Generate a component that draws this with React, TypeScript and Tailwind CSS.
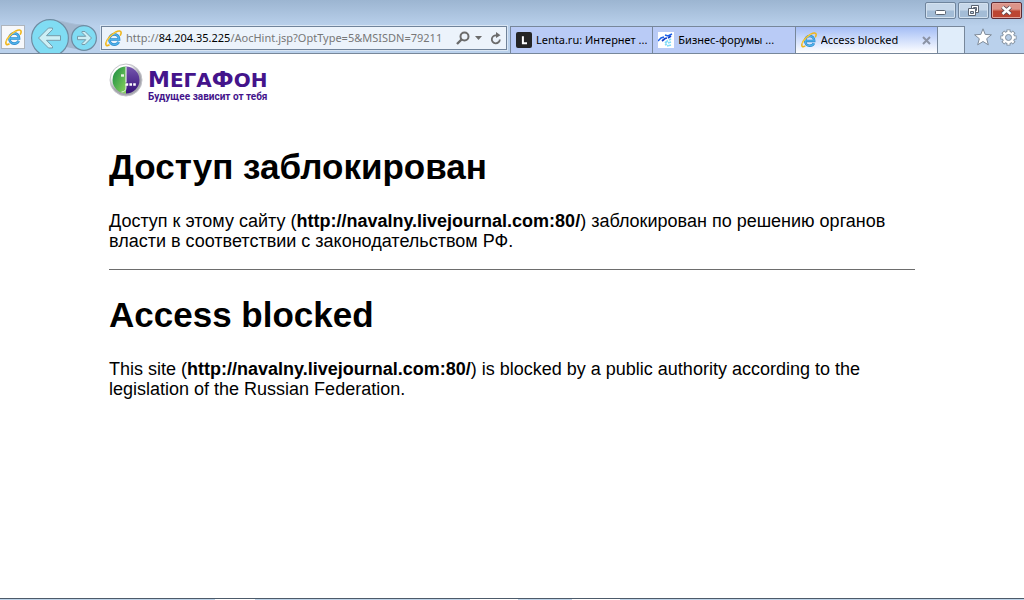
import type { ReactNode } from "react";

function IeIcon({ className }: { className: string }) {
  return (
    <svg viewBox="0 0 16 16" className={className} aria-hidden="true">
      <path
        d="M4.3 8.9H13.2C13.2 6 11.3 4.1 8.7 4.1C6 4.1 4.2 6.2 4.2 8.9C4.2 11.6 6 13.7 8.7 13.7C10.7 13.7 12.2 12.7 12.9 11.2"
        fill="none"
        stroke="#2b86c9"
        strokeWidth="2.5"
      />
      <path
        d="M4.3 8.9H13.2C13.2 6 11.3 4.1 8.7 4.1C6 4.1 4.2 6.2 4.2 8.9C4.2 11.6 6 13.7 8.7 13.7C10.7 13.7 12.2 12.7 12.9 11.2"
        fill="none"
        stroke="#4fb4ec"
        strokeWidth="1.3"
      />
      <path
        d="M3.8 14.2C1.8 15.2.4 14.7.9 12.3C1.5 9 6 3.9 10.2 1.8C12.9 .5 15.2 .7 15.2 2.5C15.2 3.3 14.9 4 14.5 4.8"
        fill="none"
        stroke="#efb51a"
        strokeWidth="1.5"
        strokeLinecap="round"
      />
      <path d="M1.3 12C2.2 8.8 6.4 4.2 10.3 2.2" fill="none" stroke="#ffe070" strokeWidth="0.6" />
    </svg>
  );
}

function NavButtons() {
  return (
    <div className="relative flex h-full w-[68px] shrink-0 overflow-hidden">
      <svg viewBox="0 0 68 34" className="absolute inset-0 h-[34px] w-[68px]" aria-hidden="true">
        <path d="M24 1C36 3 44 6 54 6L46 30L36 28Z" fill="#a3b7ce" />
        <path d="M20 .5C34 2 42 6 54 6" fill="none" stroke="#a7bdd6" />
        <circle cx="20" cy="19" r="18.4" fill="#80dcf3" stroke="#6f8ba1" strokeWidth="1.2" />
        <circle cx="54" cy="19" r="12.4" fill="#80dcf3" stroke="#6f8ba1" strokeWidth="1.2" />
        <path
          d="M8.5 19L18.5 9H22.5V10.5L16.5 16.7H30.5V21.3H16.5L22.5 27.5V29H18.5Z"
          fill="#cdeff5"
          stroke="#769aa9"
          strokeWidth="1"
        />
        <path
          d="M61.5 19L55 12.5H52V13.5L55.8 17.3H47.5V20.7H55.8L52 24.5V25.5H55Z"
          fill="#cdeff5"
          stroke="#769aa9"
          strokeWidth="1"
        />
      </svg>
      <button type="button" aria-label="Back" className="relative h-full w-10" />
      <button type="button" aria-label="Forward" className="relative h-full w-7" />
    </div>
  );
}

function Tab({ icon, title, active = false }: { icon: ReactNode; title: string; active?: boolean }) {
  return (
    <div
      className={
        active
          ? "flex min-w-0 flex-1 items-center border-l border-[#77879a] bg-linear-to-b from-[#a4bdf5] to-white pl-[5px]"
          : "flex min-w-0 flex-1 items-center border-l border-[#77879a] bg-[#b9cbf6] pl-[5px]"
      }
    >
      <button type="button" className="flex min-w-0 flex-1 items-center gap-1 text-left">
        {icon}
        <span className="truncate">{title}</span>
      </button>
      {active && (
        <button type="button" aria-label="Close tab" className="shrink-0 pr-[6px] pl-[2px]">
          <svg viewBox="0 0 9 9" className="size-[9px]">
            <path d="M1 1L8 8M8 1L1 8" stroke="#8b93a5" strokeWidth="2" />
          </svg>
        </button>
      )}
    </div>
  );
}

function LentaIcon() {
  return (
    <svg viewBox="0 0 16 16" className="size-4 shrink-0" aria-hidden="true">
      <rect width="16" height="16" rx="2" fill="#252525" />
      <path d="M6.9 4.3V11.2H11" fill="none" stroke="#fff" strokeWidth="2" />
    </svg>
  );
}

function ForumIcon() {
  return (
    <svg viewBox="0 0 16 16" className="size-4 shrink-0" aria-hidden="true">
      <rect width="16" height="16" fill="#fff" />
      <path d="M0 9L3 6L6 5M7 3L10 4L14 2" fill="none" stroke="#1c62e8" strokeWidth="1.5" />
      <path d="M4 9L7 6.5L9 6M10 6L13 4" fill="none" stroke="#1640c8" strokeWidth="1.7" />
      <path d="M7 11L10 8.5M11 8L13 7M7 13L9 12M10 11L13 10M9 14L13 13" fill="none" stroke="#82dcf8" strokeWidth="1.8" />
    </svg>
  );
}

function TitleBar() {
  const plain =
    "flex h-[17px] w-[31px] items-center justify-center rounded-[2px] border border-[#6f849c] bg-linear-to-b from-[#c6d7e9] from-45% to-[#a3bcd6] to-55% shadow-[inset_0_0_0_1px_#d3e1ef]";
  return (
    <div className="flex h-[19px] items-end justify-end gap-[2px] pr-[2px]">
      <button type="button" aria-label="Minimize" className={plain}>
        <svg viewBox="0 0 13 11" className="h-[11px] w-[13px]">
          <rect x="1.5" y="5.5" width="10" height="4" rx="1" fill="#fff" stroke="#5a6370" />
        </svg>
      </button>
      <button type="button" aria-label="Restore" className={plain}>
        <svg viewBox="0 0 13 11" className="h-[11px] w-[13px]">
          <path d="M4.5 .5H11.5V7.5H4.5Z" fill="#fff" stroke="#5a6370" />
          <path d="M6.5 2.5H9.5V5.5H6.5Z" fill="#b7cade" stroke="#5a6370" />
          <path d="M1.5 3.5H8.5V10.5H1.5Z" fill="#fff" stroke="#5a6370" />
          <path d="M3.5 6.5H6.5V8.5H3.5Z" fill="#b7cade" stroke="#5a6370" />
        </svg>
      </button>
      <button
        type="button"
        aria-label="Close"
        className="flex h-[17px] w-[31px] items-center justify-center rounded-[2px] border border-[#5c2a33] bg-linear-to-b from-[#dc9489] from-40% to-[#bc4532] to-55% shadow-[inset_0_0_0_1px_#e2a49b]"
      >
        <svg viewBox="0 0 13 11" className="h-[11px] w-[13px]">
          <path d="M2.5 2L10.5 9M10.5 2L2.5 9" stroke="#594852" strokeWidth="4.2" />
          <path d="M2.5 2L10.5 9M10.5 2L2.5 9" stroke="#fff" strokeWidth="2.4" />
        </svg>
      </button>
    </div>
  );
}

function Toolbar() {
  return (
    <div className="flex h-[34px] pl-[1px]">
      <button
        type="button"
        aria-label="Pinned site"
        className="mt-[6px] flex size-6 shrink-0 items-center justify-center border border-[#aeb5bd] bg-[#f6f8fb]"
      >
        <IeIcon className="size-[17px]" />
      </button>
      <div className="ml-[5px] flex">
        <NavButtons />
      </div>
      <div className="mt-[7px] ml-[3px] flex h-6 w-[406px] min-w-0 shrink items-center border border-[#70839a] bg-[#ecf3fb] pr-1 pl-[3px] outline outline-[#d8e5f4]">
        <IeIcon className="size-[17px] shrink-0" />
        <div className="ml-1 flex-1 overflow-hidden whitespace-nowrap text-[#777]">
          http://<span className="text-black">84.204.35.225</span>/AocHint.jsp?OptType=5&amp;MSISDN=79211
        </div>
        <button type="button" aria-label="Search" className="ml-1 shrink-0">
          <svg viewBox="0 0 14 14" className="size-[14px]">
            <circle cx="8.5" cy="5.5" r="4" fill="none" stroke="#6b6b6b" strokeWidth="2" />
            <path d="M5.5 8.5L1 13" stroke="#6b6b6b" strokeWidth="2.4" />
          </svg>
        </button>
        <button type="button" aria-label="Show addresses" className="ml-[5px] shrink-0">
          <svg viewBox="0 0 7 4" className="h-1 w-[7px]">
            <path d="M0 0H7L3.5 4Z" fill="#6b6b6b" />
          </svg>
        </button>
        <button type="button" aria-label="Refresh" className="ml-2 shrink-0">
          <svg viewBox="0 0 12 13" className="h-[13px] w-3">
            <path d="M6.5 3.4A4 4 0 1 0 9.8 7.4" fill="none" stroke="#6b6b6b" strokeWidth="1.8" />
            <path d="M6 0V6L10.5 3.2Z" fill="#6b6b6b" />
          </svg>
        </button>
      </div>
      <div className="mt-[7px] ml-[3px] flex min-w-0 flex-1 border-t border-[#77879a]">
        <Tab icon={<LentaIcon />} title="Lenta.ru: Интернет ..." />
        <Tab icon={<ForumIcon />} title="Бизнес-форумы ..." />
        <Tab icon={<IeIcon className="size-4 shrink-0" />} title="Access blocked" active />
        <button type="button" aria-label="New tab" className="w-7 shrink-0 border-x border-[#77879a] bg-[#e0edfa]" />
      </div>
      <div className="mt-[9px] flex h-[18px] w-[59px] shrink-0 items-center gap-2 pl-[9px]">
        <button type="button" aria-label="Favorites">
          <svg viewBox="0 0 18 18" className="size-[18px]">
            <path
              d="M9 .8L11.2 6.4L17.4 6.8L12.7 10.7L14.3 16.8L9 13.5L3.7 16.8L5.3 10.7L.6 6.8L6.8 6.4Z"
              fill="#fff"
              stroke="#7f8b99"
            />
          </svg>
        </button>
        <button type="button" aria-label="Tools">
          <svg viewBox="0 0 18 18" className="size-[17px]">
            <g stroke="#7f8b99" strokeWidth="4.2">
              <path d="M9 .5V17.5M.5 9H17.5M3 3L15 15M15 3L3 15" />
            </g>
            <circle cx="9" cy="9" r="6.8" fill="#7f8b99" />
            <g stroke="#fff" strokeWidth="2.4">
              <path d="M9 1.3V16.7M1.3 9H16.7M3.6 3.6L14.4 14.4M14.4 3.6L3.6 14.4" />
            </g>
            <circle cx="9" cy="9" r="6" fill="#fff" />
            <circle cx="9" cy="9" r="3.2" fill="#b7cde7" stroke="#7f8b99" />
          </svg>
        </button>
      </div>
    </div>
  );
}

function Logo() {
  return (
    <a href="#" className="flex w-max items-start gap-[5px] text-[#44148b]">
      <svg viewBox="0 0 34 34" className="size-[34px]" aria-hidden="true">
        <defs>
          <radialGradient id="rim" cx="40%" cy="35%">
            <stop offset="70%" stopColor="#fff" />
            <stop offset="100%" stopColor="#a5a5ad" />
          </radialGradient>
          <linearGradient id="green" x1="0" y1="0" x2="1" y2="1">
            <stop offset="0" stopColor="#178a43" />
            <stop offset="1" stopColor="#8bd45d" />
          </linearGradient>
          <linearGradient id="violet" x1="0" y1="0" x2="0" y2="1">
            <stop offset="0" stopColor="#7657ae" />
            <stop offset="1" stopColor="#351078" />
          </linearGradient>
        </defs>
        <circle cx="17" cy="17" r="16" fill="url(#rim)" stroke="#c4c4ca" />
        <path d="M17 3.5A13.5 13.5 0 0 0 17 30.5Z" fill="url(#green)" />
        <path d="M17 3.5A13.5 13.5 0 0 1 17 30.5Z" fill="url(#violet)" />
        <path d="M17 4V19.5" fill="none" stroke="#e6efe8" strokeWidth="1.2" />
        <path d="M17 21V25C17 27.5 15 29 12.5 29" fill="none" stroke="#e6efe8" strokeWidth="1" />
        <path d="M12 12.5H15" stroke="#e9f5e4" strokeWidth="2.4" />
        <path d="M16.6 21.5H19.2M20.4 21.5H23M24.2 21.5H26.8" stroke="#fff" strokeWidth="2.4" />
      </svg>
      <span className="flex flex-col pt-[6px] font-bold">
        <span className="font-['DejaVu_Sans',sans-serif] text-[22px] leading-[21px]">
          М<span className="text-[20px]">ЕГА</span>Ф<span className="text-[20px]">ОН</span>
        </span>
        <span className="font-[Roboto,sans-serif] text-[10px] leading-3">Будущее зависит от тебя</span>
      </span>
    </a>
  );
}

function Notice({ title, children }: { title: string; children: ReactNode }) {
  return (
    <section>
      <h1 className="text-[35px] leading-10 font-bold">{title}</h1>
      <p className="mt-6 text-[18px] leading-5">{children}</p>
    </section>
  );
}

export default function App() {
  return (
    <div className="flex min-h-screen flex-col bg-white font-['Liberation_Sans',Arial,sans-serif] text-black">
      <header className="border-b border-[#77879a] bg-linear-to-b from-[#9cb5d1] to-[#bad1ec] to-50% font-['Noto_Sans',sans-serif] text-[11px] leading-4">
        <TitleBar />
        <Toolbar />
      </header>
      <main className="mx-[109px] flex-1 pt-[9px]">
        <Logo />
        <div className="mt-11">
          <Notice title="Доступ заблокирован">
            Доступ к этому сайту (<b>http://navalny.livejournal.com:80/</b>) заблокирован по решению органов власти в
            соответствии с законодательством РФ.
          </Notice>
          <hr className="mt-[18px] mb-[25px] border-[#6d6d6d]" />
          <Notice title="Access blocked">
            This site (<b>http://navalny.livejournal.com:80/</b>) is blocked by a public authority according to the
            legislation of the Russian Federation.
          </Notice>
        </div>
      </main>
      <footer className="flex h-[2px] border-t border-[#4d5a69] bg-[#bdd3e8]">
        <span className="ml-[21%] h-px w-10 bg-white" />
        <span className="ml-[21%] h-px w-12 bg-white" />
        <span className="ml-[54px] h-px w-12 bg-white" />
      </footer>
    </div>
  );
}
